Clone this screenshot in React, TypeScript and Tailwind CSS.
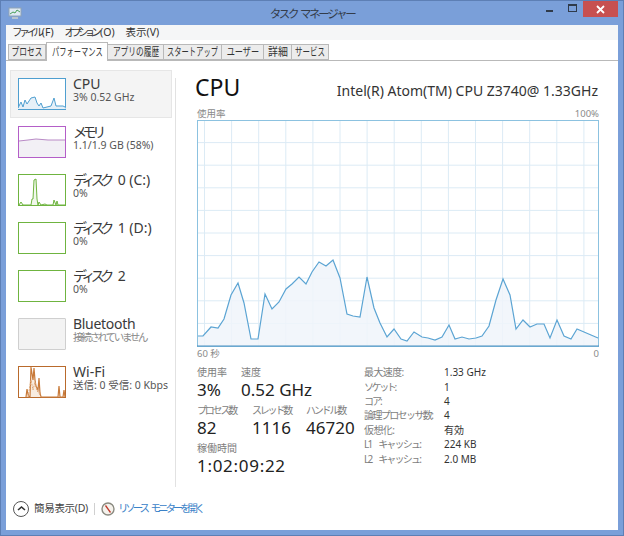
import type { ReactNode } from "react";

const FONT = "font-['Noto_Sans','Noto_Sans_CJK_JP',sans-serif]";

const cpuPoints: [number, number][] = [
  [0, 216], [6, 216], [14, 207], [21, 208], [27, 199], [34, 175], [41, 163], [47, 183],
  [54, 219], [61, 219], [68, 174], [75, 189], [82, 182], [89, 169], [95, 164], [102, 157],
  [109, 164], [115, 152], [122, 142], [129, 146], [136, 140], [143, 158], [150, 194],
  [156, 196], [163, 197], [170, 157], [177, 188], [183, 203], [190, 217], [197, 209],
  [204, 219], [210, 221], [217, 212], [225, 217], [231, 218], [238, 220], [245, 217],
  [252, 205], [258, 219], [265, 217], [272, 219], [279, 218], [285, 216], [292, 206],
  [299, 180], [306, 159], [313, 175], [319, 209], [326, 200], [333, 207], [340, 204],
  [347, 204], [353, 218], [360, 200], [367, 216], [374, 219], [380, 209], [387, 212],
  [394, 215], [401, 218],
];

const tabs = [
  { label: "プロセス", w: "w-[38px]", sx: "scale-x-[.7]" },
  { label: "パフォーマンス", w: "w-[62px]", sx: "scale-x-[.66]" },
  { label: "アプリの履歴", w: "w-[56px]", sx: "scale-x-[.7]" },
  { label: "スタートアップ", w: "w-[58px]", sx: "scale-x-[.66]" },
  { label: "ユーザー", w: "w-[42px]", sx: "scale-x-[.74]" },
  { label: "詳細", w: "w-[28px]", sx: "scale-x-[.9]" },
  { label: "サービス", w: "w-[37px]", sx: "scale-x-[.68]" },
];

function toPolyline(points: [number, number][]) {
  return points.map(([x, y]) => `${x},${y}`).join(" ");
}

function CpuChart() {
  const vertical = Array.from({ length: 15 }, (_, i) => 7.5 + i * 27.1);
  const horizontal = Array.from({ length: 9 }, (_, i) => 22.6 + i * 22.6);
  const line = toPolyline(cpuPoints);
  return (
    <svg width="402" height="227" viewBox="0 0 402 227" className="block">
      <rect x="0" y="0" width="402" height="227" fill="#ffffff" />
      {vertical.map((x) => (
        <line key={x} x1={x} x2={x} y1="0" y2="226" stroke="#dcebf5" strokeWidth="1" />
      ))}
      {horizontal.map((y) => (
        <line key={y} x1="0" x2="402" y1={y} y2={y} stroke="#dcebf5" strokeWidth="1" />
      ))}
      <polygon points={`0,226 ${line} 401,226`} fill="#f0f5fa" fillOpacity="0.85" />
      <polyline points={line} fill="none" stroke="#5ba4d3" strokeWidth="1.2" />
      <rect x="0.5" y="0.5" width="401" height="226" fill="none" stroke="#8cc2e0" />
      <line x1="0" x2="402" y1="226" y2="226" stroke="#4a90c0" />
    </svg>
  );
}

function Thumb({ kind }: { kind: string }) {
  if (kind === "cpu") {
    const pts = "0,30 3,24 5,29 7,22 9,26 13,20 17,19 19,25 21,28 23,25 25,30 33,28 36,20 38,28 42,28 45,28 47,29";
    return (
      <svg width="48" height="32" className="block shrink-0">
        <rect x="0.5" y="0.5" width="47" height="31" fill="#fff" stroke="#4f9fd0" />
        <polygon points={`0,31 ${pts} 48,31`} fill="#e6f0f8" />
        <polyline points={pts} fill="none" stroke="#4f9fd0" />
      </svg>
    );
  }
  if (kind === "mem") {
    return (
      <svg width="48" height="32" className="block shrink-0">
        <rect x="0.5" y="0.5" width="47" height="31" fill="#fff" stroke="#b45ec8" />
        <polygon points="1,15 10,14 18,13 30,14 47,14 47,31 1,31" fill="#f2f0f5" />
        <polyline points="1,15 10,14 18,13 30,14 47,14" fill="none" stroke="#b98ac6" />
      </svg>
    );
  }
  if (kind === "disk") {
    const pts = "1,31 3,28 5,31 13,31 14,25 15,25 16,6 18,5 19,25 20,31 21,28 23,31 27,30 29,31 35,31 36,26 38,31 39,27 40,31 47,31";
    return (
      <svg width="48" height="32" className="block shrink-0">
        <rect x="0.5" y="0.5" width="47" height="31" fill="#fff" stroke="#6fb440" />
        <polygon points={pts} fill="#f1f8ec" />
        <polyline points={pts} fill="none" stroke="#6fb440" strokeWidth="1" />
      </svg>
    );
  }
  if (kind === "empty") {
    return <div className="h-8 w-12 shrink-0 border border-[#6fb440] bg-white" />;
  }
  if (kind === "off") {
    return <div className="h-8 w-12 shrink-0 rounded-[1px] border border-[#cfcfcf] bg-[#f3f3f3]" />;
  }
  const a = "8,31 9,23 10,28 11,31 12,31 13,1 15,14 16,2 17,14 18,20 20,24 21,12 22,27 23,31 40,31 41,20 42,31 45,31 46,24 47,31";
  const b = "10,31 13,14 15,24 17,16 19,25 21,27 23,31";
  return (
    <svg width="48" height="32" className="block shrink-0">
      <rect x="0.5" y="0.5" width="47" height="31" fill="#fff" stroke="#b96a2c" />
      <polygon points={a} fill="#f8ece0" />
      <polyline points={a} fill="none" stroke="#c87a3a" strokeWidth="1.2" />
      <polyline points={b} fill="none" stroke="#e0a878" strokeDasharray="2 1" />
    </svg>
  );
}

function SideItem({
  kind,
  title,
  sub,
  selected,
  muted,
}: {
  kind: string;
  title: ReactNode;
  sub: string;
  selected?: boolean;
  muted?: boolean;
}) {
  return (
    <div
      className={
        selected
          ? "flex h-12 items-start gap-[7px] border border-[#e6e6e6] bg-[#f4f4f4] pl-[7px] pt-[7px]"
          : "flex h-12 items-start gap-[7px] border border-transparent pl-[7px] pt-[7px]"
      }
    >
      <Thumb kind={kind} />
      <div className="-mt-[2px] min-w-0">
        <div className="h-[15px] whitespace-nowrap text-[14px] leading-[15px] text-[#3a3a3a]">{title}</div>
        <div
          className={
            muted
              ? "h-[13px] whitespace-nowrap text-[10.5px] leading-[12px] tracking-[-2.3px] text-[#8a8a8a]"
              : "h-[13px] whitespace-nowrap text-[10.5px] leading-[12px] text-[#555555]"
          }
        >
          {sub}
        </div>
      </div>
    </div>
  );
}

function Stat({ label, value, w, tight, wide }: { label: string; value: string; w: string; tight?: boolean; wide?: boolean }) {
  return (
    <div className={w}>
      <div
        className={
          tight
            ? "h-[13px] whitespace-nowrap text-[10px] leading-[13px] tracking-[-2.2px] text-[#7d7d7d]"
            : "h-[13px] whitespace-nowrap text-[10px] leading-[13px] text-[#7d7d7d]"
        }
      >
        {label}
      </div>
      <div
        className={
          wide
            ? "h-[22px] whitespace-nowrap text-[17px] leading-[22px] tracking-[0.7px] text-[#222222]"
            : "h-[22px] whitespace-nowrap text-[17px] leading-[22px] text-[#222222]"
        }
      >
        {value}
      </div>
    </div>
  );
}

function Spec({ k, v, kc }: { k: string; v: string; kc?: string }) {
  return (
    <div className="flex h-[14.4px] items-center whitespace-nowrap text-[10px] leading-[14px]">
      <div className={`w-[80px] text-[#7d7d7d] ${kc ?? "tracking-[-0.6px]"}`}>{k}</div>
      <div className="text-[#333333]">{v}</div>
    </div>
  );
}

export default function App() {
  return (
    <div className={`flex h-[536px] w-[624px] flex-col overflow-hidden border border-[#5d7fb5] bg-[#7a9fd9] ${FONT}`}>
      {/* タイトルバー */}
      <div className="relative flex h-6 shrink-0 items-center">
        <svg width="14" height="13" viewBox="0 0 14 13" className="ml-[7px] mt-[1px]">
          <rect x="1" y="1" width="12" height="8" fill="#dfe9f2" stroke="#8fa3b5" />
          <polyline points="2,7 5,5 7,6 9,3 12,5" fill="none" stroke="#4aa05a" />
          <rect x="4" y="10" width="6" height="2" fill="#b8c4ce" />
        </svg>
        <div className="absolute left-0 right-0 top-[5px] text-center text-[11.5px] leading-[16px] tracking-[-2.3px] text-[#333c4a]">
          タスク <span className="ml-[2px]">マネージャー</span>
        </div>
        <div className="ml-auto mr-[5px] flex h-[16px] items-center self-start">
          <div className="mr-[15px] mt-[4px] h-[2px] w-[7px] bg-[#2f3a4a]" />
          <div className="mb-[2px] mr-[6px] h-[8px] w-[9px] border border-t-2 border-[#2f3a4a]" />
          <div className="relative flex h-[16px] w-[35px] items-center justify-center bg-[#c75050] text-white">
            <svg width="9" height="9" viewBox="0 0 9 9">
              <path d="M1 1 L8 8 M8 1 L1 8" stroke="#ffffff" strokeWidth="1.8" />
            </svg>
          </div>
        </div>
      </div>

      <div className="mx-[5px] mb-[5px] flex min-h-0 flex-1 flex-col bg-white">
        {/* メニュー */}
        <div className="flex h-[15px] shrink-0 items-center gap-[11px] bg-[#f5f6f7] pl-[6px] text-[10.5px] text-[#333333]">
          <span className="whitespace-nowrap">
            <span className="tracking-[-3.3px]">ファイル</span>
            <span className="ml-[1px]">(F)</span>
          </span>
          <span className="whitespace-nowrap">
            <span className="tracking-[-3.8px]">オプション</span>
            <span className="ml-[2px]">(O)</span>
          </span>
          <span className="whitespace-nowrap">表示(V)</span>
        </div>

        {/* タブ */}
        <div className="flex h-[21px] shrink-0 items-end border-b border-[#b9b9b9] pl-[2px]">
          {tabs.map((t, i) => (
            <div
              key={t.label}
              className={
                i === 1
                  ? `${t.w} relative -mb-[1px] flex h-[19px] shrink-0 items-center justify-center border border-b-0 border-[#b9b9b9] bg-white text-[11px] text-[#333333]`
                  : `${t.w} flex h-[16px] shrink-0 items-center justify-center border border-l-0 border-[#b9b9b9] bg-[#ececec] text-[11px] text-[#333333] first:border-l`
              }
            >
              <span className={`${t.sx} shrink-0 whitespace-nowrap`}>{t.label}</span>
            </div>
          ))}
        </div>

        <div className="flex min-h-0 flex-1">
          {/* サイドバー */}
          <div className="flex w-[170px] shrink-0 flex-col">
            <div className="ml-[4px] mr-[4px] mt-[9px] flex flex-col">
              <SideItem kind="cpu" title="CPU" sub="3%  0.52 GHz" selected />
              <SideItem kind="mem" title={<span className="tracking-[-4.4px]">メモリ</span>} sub="1.1/1.9 GB (58%)" />
              <SideItem kind="disk" title={<><span className="tracking-[-4.6px]">ディスク</span><span className="ml-[8px]">0 (C:)</span></>} sub="0%" />
              <SideItem kind="empty" title={<><span className="tracking-[-4.6px]">ディスク</span><span className="ml-[8px]">1 (D:)</span></>} sub="0%" />
              <SideItem kind="empty" title={<><span className="tracking-[-4.6px]">ディスク</span><span className="ml-[8px]">2</span></>} sub="0%" />
              <SideItem kind="off" title={<span className="tracking-[-0.3px]">Bluetooth</span>} sub="接続されていません" muted />
              <SideItem kind="wifi" title="Wi-Fi" sub="送信: 0  受信: 0 Kbps" />
            </div>
            <div className="mt-auto flex h-[43px] items-center pl-[7px]">
              <div className="flex h-4 w-4 shrink-0 items-center justify-center rounded-full border border-[#555555] bg-white">
                <svg width="9" height="7" viewBox="0 0 9 7">
                  <path d="M1 5 L4.5 2 L8 5" fill="none" stroke="#333333" strokeWidth="1.6" />
                </svg>
              </div>
              <span className="ml-[5px] whitespace-nowrap text-[10.5px] tracking-[-0.3px] text-[#444444]">簡易表示(D)</span>
              <div className="ml-[6px] h-[12px] w-px shrink-0 bg-[#d0d0d0]" />
              <svg width="14" height="14" viewBox="0 0 14 14" className="ml-[6px] shrink-0">
                <circle cx="7" cy="7" r="6" fill="#f5f2ec" stroke="#8a8a80" strokeWidth="1.4" />
                <path d="M4.5 3.5 L9.5 10.5" stroke="#c0392b" strokeWidth="1.3" />
              </svg>
              <span className="ml-[3px] whitespace-nowrap text-[10.5px] tracking-[-3.1px] text-[#3b82c8] [word-spacing:4px]">リソース モニターを開く</span>
            </div>
          </div>

          {/* メイン */}
          <div className="flex min-w-0 flex-1">
            <div className="-ml-px mb-[43px] mt-[17px] w-px shrink-0 bg-[#e2e2e2]" />
            <div className="w-full pl-[21px]">
              <div className="flex h-[44px] items-end justify-between pr-[20px]">
                <div className="-ml-[2px] mb-[3px] text-[23px] leading-[30px] text-[#111111]">CPU</div>
                <div className="mb-[4px] whitespace-nowrap text-[14px] leading-[20px] text-[#333333]">
                  Intel(R) Atom(TM) CPU Z3740@ 1.33GHz
                </div>
              </div>
              <div className="flex h-[15px] w-[402px] items-end justify-between text-[9.5px] leading-[13px] text-[#8a8a8a]">
                <span>使用率</span>
                <span>100%</span>
              </div>
              <CpuChart />
              <div className="flex h-[14px] w-[402px] items-center justify-between text-[9.5px] text-[#8a8a8a]">
                <span>60 秒</span>
                <span>0</span>
              </div>
              <div className="mt-[5px] flex">
                <div className="w-[167px]">
                  <div className="flex">
                    <Stat label="使用率" value="3%" w="w-[44px]" />
                    <Stat label="速度" value="0.52 GHz" w="w-[120px]" />
                  </div>
                  <div className="mt-[3px] flex">
                    <Stat label="プロセス数" value="82" w="w-[55px]" tight />
                    <Stat label="スレッド数" value="1116" w="w-[54px]" tight />
                    <Stat label="ハンドル数" value="46720" w="w-[58px]" tight />
                  </div>
                  <div className="mt-[3px]">
                    <Stat label="稼働時間" value="1:02:09:22" w="w-[120px]" wide />
                  </div>
                </div>
                <div className="-mt-px">
                  <Spec k="最大速度:" v="1.33 GHz" />
                  <Spec k="ソケット:" v="1" kc="tracking-[-2.4px]" />
                  <Spec k="コア:" v="4" kc="tracking-[-2px]" />
                  <Spec k="論理プロセッサ数:" v="4" kc="tracking-[-1.6px]" />
                  <Spec k="仮想化:" v="有効" />
                  <Spec k="L1 キャッシュ:" v="224 KB" kc="tracking-[-1.8px] [word-spacing:6px]" />
                  <Spec k="L2 キャッシュ:" v="2.0 MB" kc="tracking-[-1.8px] [word-spacing:6px]" />
                </div>
              </div>
            </div>
          </div>
        </div>
      </div>
    </div>
  );
}
